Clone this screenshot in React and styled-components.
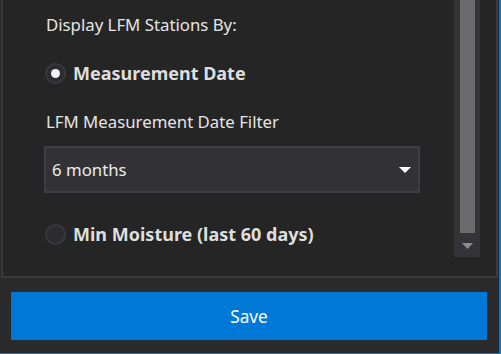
import React from 'react';
import styled, { createGlobalStyle } from 'styled-components';

const GlobalStyle = createGlobalStyle`
  html, body {
    margin: 0;
    padding: 0;
    background: #2a2a2a;
  }
  * {
    box-sizing: border-box;
  }
`;

const Window = styled.div`
  width: 501px;
  height: 354px;
  display: flex;
  flex-direction: column;
  background: #2a2a2a;
  border-right: 2px solid #0078d7;
  border-bottom: 1px solid #0078d7;
  font-family: "Noto Sans", "Open Sans", sans-serif;
  color: #e4e4e4;
`;

const Panel = styled.div`
  height: 278px;
  margin-left: 1px;
  margin-right: 1px;
  display: flex;
  background: #252525;
  border: 2px solid #3a3a3d;
  border-top: none;
`;

const Content = styled.div`
  flex: 1;
  display: flex;
  flex-direction: column;
  padding-left: 43px;
  padding-right: 34px;
  padding-top: 15px;
`;

const Label = styled.div`
  font-size: 16.8px;
  line-height: 20px;
  margin-top: ${(p) => p.$top || 0}px;
`;

const RadioRow = styled.label`
  display: flex;
  align-items: center;
  gap: 7px;
  height: 22px;
  margin-top: ${(p) => p.$top || 0}px;
  margin-left: -1px;
  font-size: 18px;
  font-weight: 700;
  color: #dedede;
`;

const RadioCircle = styled.span`
  width: 21px;
  height: 21px;
  border-radius: 50%;
  background: #2c2c30;
  border: 2px solid #38383e;
  display: flex;
  align-items: center;
  justify-content: center;

  &::after {
    content: '';
    display: ${(p) => (p.$checked ? 'block' : 'none')};
    width: 9px;
    height: 9px;
    border-radius: 50%;
    background: #f4f4f4;
  }
`;

const Select = styled.div`
  margin-top: 14px;
  margin-left: -2px;
  height: 47px;
  display: flex;
  align-items: center;
  justify-content: space-between;
  padding: 0 6px 0 6px;
  background: #323236;
  border: 2px solid #3e3e44;
  font-size: 16.8px;
  color: #ececec;
`;

const Caret = styled.svg`
  width: 14px;
  height: 8px;
`;

const Scrollbar = styled.div`
  width: 26px;
  height: 257px;
  margin-right: 16px;
  background: #333338;
  display: flex;
  flex-direction: column;
  align-items: center;
`;

const Thumb = styled.div`
  width: 15px;
  height: 233px;
  background: #6b6b6b;
`;

const ScrollArrow = styled.svg`
  margin-top: 10px;
  width: 11px;
  height: 6px;
`;

const Footer = styled.div`
  flex: 1;
  padding: 14px 12px 0 11px;
`;

const SaveButton = styled.button`
  width: 100%;
  height: 48px;
  border: none;
  background: #0078d7;
  color: #ffffff;
  font-family: "Noto Sans", "Open Sans", sans-serif;
  font-size: 17.3px;
  cursor: pointer;
`;

const Radio = ({ checked, top, children }) => (
  <RadioRow $top={top}>
    <RadioCircle $checked={checked} />
    {children}
  </RadioRow>
);

export default function App() {
  return (
    <>
      <GlobalStyle />
      <Window>
        <Panel>
          <Content>
            <Label>Display LFM Stations By:</Label>
            <Radio checked top={27}>Measurement Date</Radio>
            <Label $top={28}>LFM Measurement Date Filter</Label>
            <Select>
              <span>6 months</span>
              <Caret viewBox="0 0 14 8">
                <path d="M1 1 H13 L7 7 Z" fill="#ffffff" />
              </Caret>
            </Select>
            <Radio top={30}>Min Moisture (last 60 days)</Radio>
          </Content>
          <Scrollbar>
            <Thumb />
            <ScrollArrow viewBox="0 0 11 6">
              <path d="M0 0 H11 L5.5 6 Z" fill="#8c8c8c" />
            </ScrollArrow>
          </Scrollbar>
        </Panel>
        <Footer>
          <SaveButton>Save</SaveButton>
        </Footer>
      </Window>
    </>
  );
}
